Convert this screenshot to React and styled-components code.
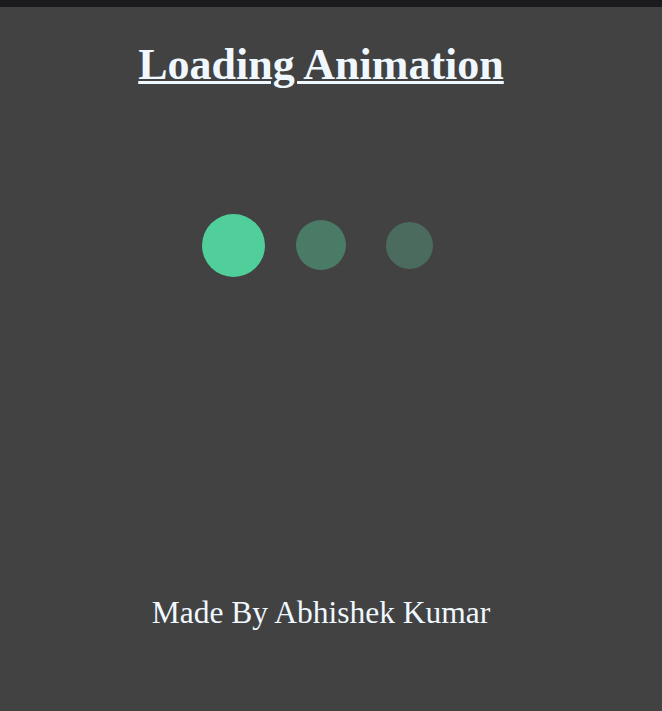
import React from 'react';
import styled, { createGlobalStyle } from 'styled-components';

const GlobalStyle = createGlobalStyle`
  html, body {
    margin: 0;
    padding: 0;
    background: #424242;
  }
`;

const TopBar = styled.div`
  height: 7px;
  background: #1b1b1d;
`;

const Page = styled.main`
  display: flex;
  flex-direction: column;
  align-items: center;
  height: 704px;
  padding-right: 20px;
  font-family: 'Liberation Serif', 'Times New Roman', serif;
  color: aliceblue;
`;

const Title = styled.h1`
  margin: 33px 0 0;
  font-size: 44px;
  font-weight: 700;
  line-height: 50px;
  text-decoration: underline;
  text-decoration-thickness: 3px;
`;

const Loader = styled.div`
  display: flex;
  align-items: center;
  margin-top: 123px;
  height: 64px;
`;

const Slot = styled.div`
  display: flex;
  align-items: center;
  justify-content: center;
  width: 88px;
`;

const Dot = styled.span`
  display: block;
  width: ${p => p.$size}px;
  height: ${p => p.$size}px;
  border-radius: 50%;
  background: ${p => p.$color};
`;

const Footer = styled.p`
  margin: auto 0 0;
  padding-bottom: 80px;
  font-size: 31.5px;
  line-height: 36px;
`;

const dots = [
  { size: 63, color: '#50cf9b' },
  { size: 50, color: '#4a7b67' },
  { size: 47, color: '#4a6b5d' },
];

export default function App() {
  return (
    <>
      <GlobalStyle />
      <TopBar />
      <Page>
        <Title>Loading Animation</Title>
        <Loader>
          {dots.map((d, i) => (
            <Slot key={i}>
              <Dot $size={d.size} $color={d.color} />
            </Slot>
          ))}
        </Loader>
        <Footer>Made By Abhishek Kumar</Footer>
      </Page>
    </>
  );
}
